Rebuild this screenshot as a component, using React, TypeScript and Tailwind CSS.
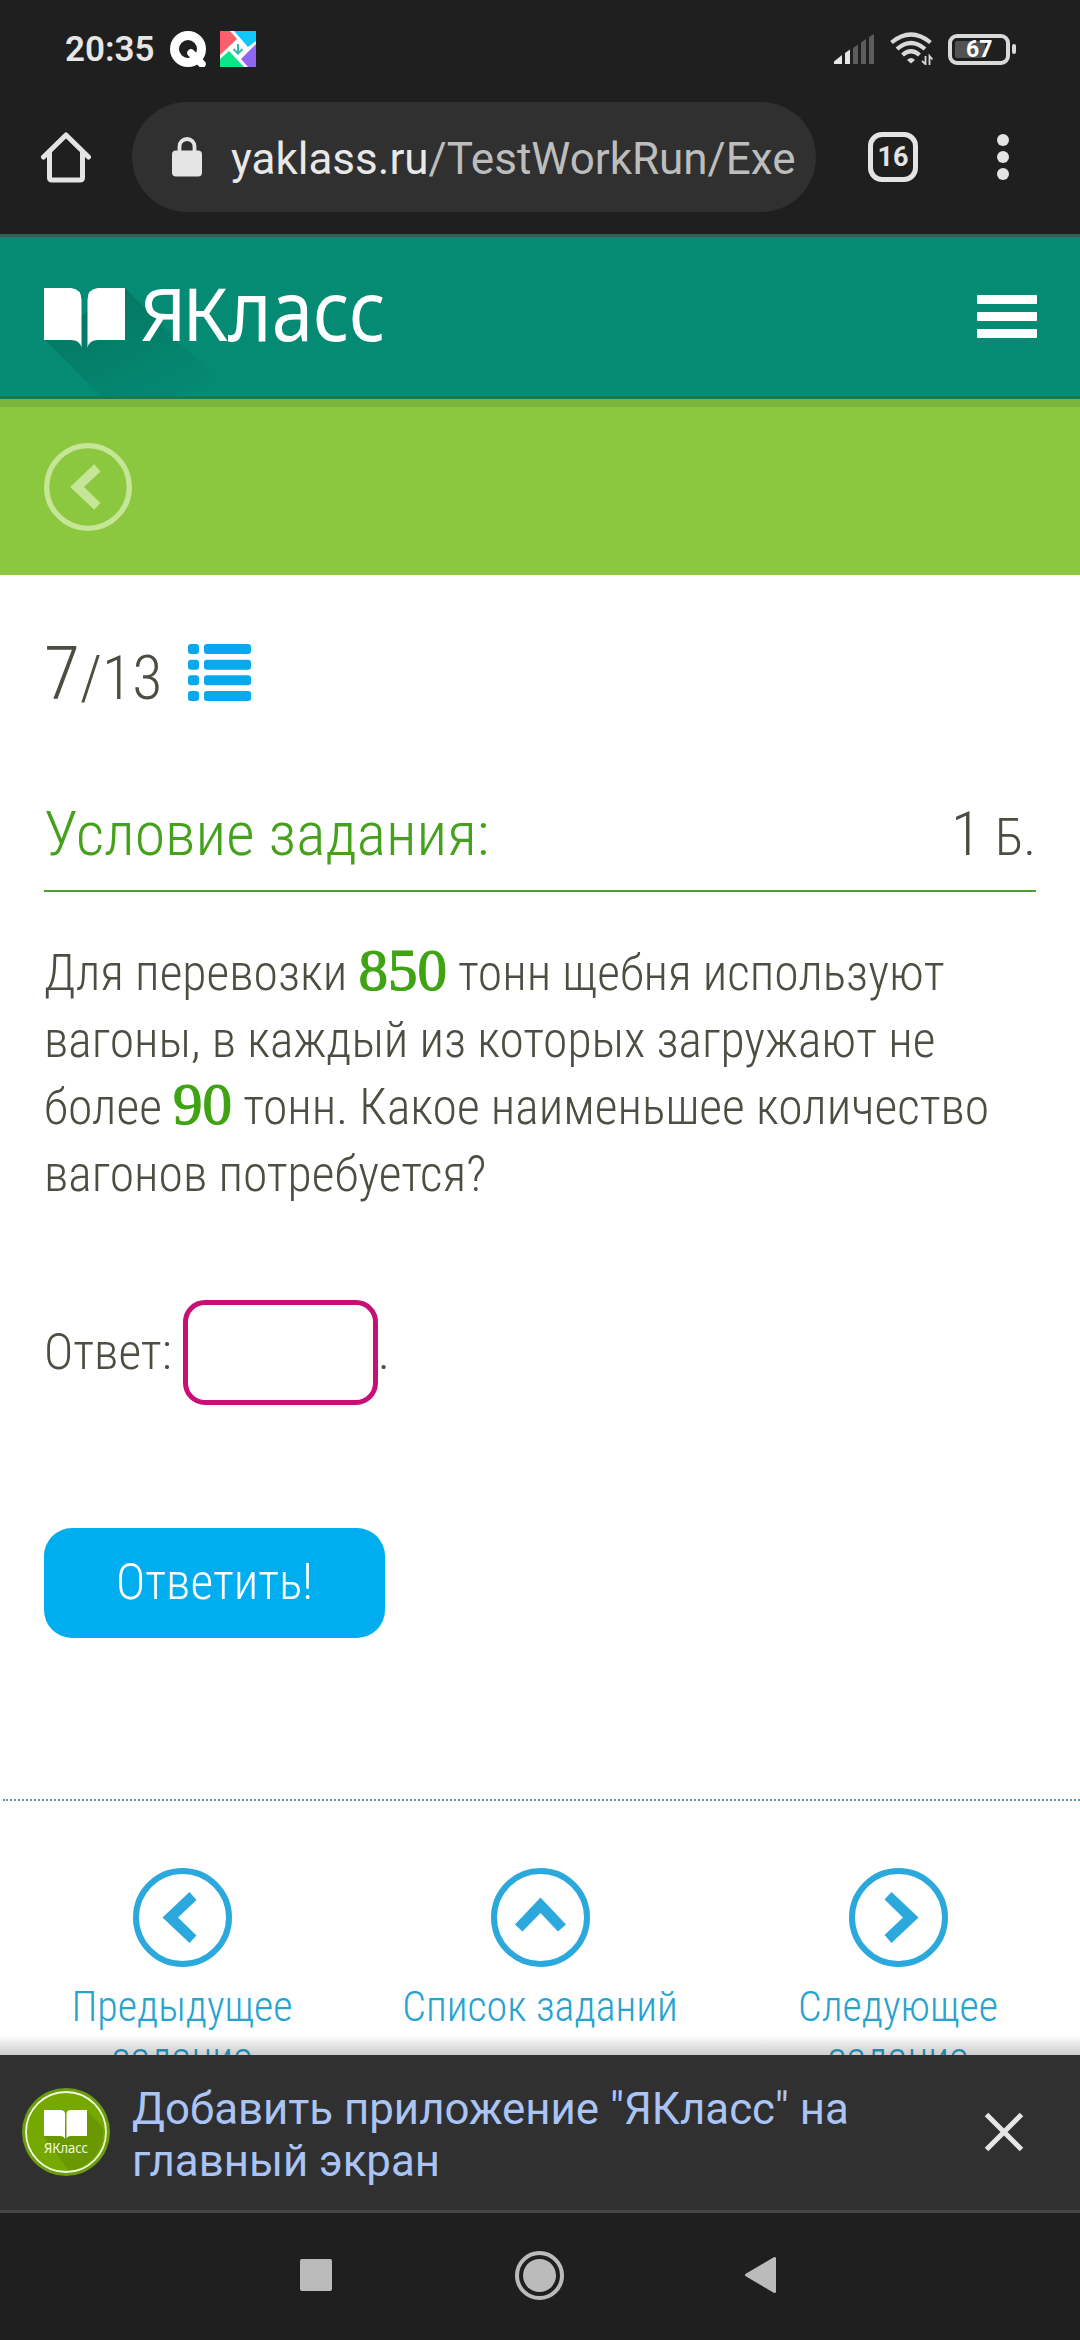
import React from "react";

const condensed =
  "font-['Roboto_Condensed','Roboto',sans-serif] font-light [font-stretch:75%]";

function StatusBar() {
  return (
    <div className="flex h-[98px] items-center bg-[#1f1f1f] pl-[65px]">
      <span className="w-[105px] text-[35px] font-semibold leading-none text-[#e6e6e6]">20:35</span>
      <svg className="h-9 w-9" viewBox="0 0 36 36">
        <circle cx="18" cy="18" r="13.5" fill="none" stroke="#fff" strokeWidth="9" />
        <path d="M21 22L32 33" stroke="#fff" strokeWidth="7.5" strokeLinecap="round" />
      </svg>
      <svg className="ml-[14px] h-9 w-9" viewBox="0 0 36 36">
        <rect width="36" height="36" fill="#fff" />
        <path d="M0 0H10L17 8L0 24Z" fill="#ff5f6d" />
        <path d="M14 0H36V10L28 16Z" fill="#0ec8fa" />
        <path d="M36 13V36H28L21 28Z" fill="#8f66f2" />
        <path d="M9 20L24 36H0V28Z" fill="#0be487" />
        <path d="M18 13V22M13.5 18L18 22.5L22.5 18" fill="none" stroke="#35b9b5" strokeWidth="2" />
      </svg>
      <svg className="ml-[578px] h-[30px] w-10" viewBox="0 0 40 30">
        <path d="M0 27.5L8 21V30H0Z" fill="#e6e6e6" />
        <path d="M11 19L16 15.500V30H11Z" fill="#e6e6e6" />
        <path d="M19 14L24 10.500V30H19Z" fill="#5c5c5c" />
        <path d="M27 8.500L32 5V30H27Z" fill="#5c5c5c" />
        <path d="M35 3L40 0V30H35Z" fill="#5c5c5c" />
      </svg>
      <svg className="ml-4 h-[34px] w-[43px]" viewBox="0 0 43 34">
        <g fill="none" stroke="#d9d9d9" strokeWidth="4.2">
          <path d="M1.500 10.500Q21 -5.500 40.500 10.500" />
          <path d="M7 17Q21 5 35 17" />
          <path d="M12.500 23Q21 15.500 29.500 23" />
        </g>
        <path d="M17 28Q21 24 25 28L21 31.500Z" fill="#d9d9d9" />
        <path d="M35.500 24V33M32 29L35.500 32M39.500 33V24L42.500 27.500" fill="none" stroke="#d9d9d9" strokeWidth="1.800" />
      </svg>
      <div className="ml-[15px] flex h-[31px] w-[62px] items-center rounded-[9px] border-4 border-[#d9d9d9] p-[3px]">
        <div className="flex h-full w-[30px] items-center rounded-[2px] bg-[#525252] pl-[11px] text-[23px] font-bold leading-none text-white">
          67
        </div>
      </div>
      <div className="ml-0.5 h-[10px] w-1 rounded-full bg-[#d9d9d9]" />
    </div>
  );
}

function BrowserBar() {
  return (
    <div className="flex h-[136px] items-center bg-[#1f1f1f] pb-[18px] pl-[41px]">
      <svg className="h-[52px] w-[50px]" viewBox="0 0 50 52" fill="none" stroke="#e4e4e4" strokeWidth="5" strokeLinecap="round" strokeLinejoin="round">
        <path d="M2.500 26L25 4L47.500 26" />
        <path d="M8.500 22V46.500Q8.500 49 11 49H39Q41.500 49 41.500 46.500V22" />
      </svg>
      <div className="ml-[41px] flex h-[110px] w-[684px] items-center rounded-full bg-[#303030] pl-10">
        <svg className="h-10 w-[30px]" viewBox="0 0 30 40">
          <rect y="13.500" width="30" height="26" rx="4" fill="#e4e4e4" />
          <path d="M7.500 15V9.500a7.500 7.500 0 0 1 15 0V15" fill="none" stroke="#e4e4e4" strokeWidth="3.800" />
        </svg>
        <span className="ml-[29px] pt-1 text-[44px] leading-none text-[#bdbdbd]">
          <span className="text-[#e8e8e8]">yaklass.ru</span>/TestWorkRun/Exe
        </span>
      </div>
      <div className="ml-[52px] flex h-[50px] w-[50px] items-center justify-center rounded-[14px] border-[5px] border-[#e4e4e4] text-[27px] font-bold leading-none text-[#e4e4e4]">
        16
      </div>
      <div className="ml-[79px] flex flex-col gap-[5px]">
        <i className="size-3 rounded-full bg-[#e4e4e4]" />
        <i className="size-3 rounded-full bg-[#e4e4e4]" />
        <i className="size-3 rounded-full bg-[#e4e4e4]" />
      </div>
    </div>
  );
}

function SiteHeader() {
  return (
    <header className="relative flex h-[165px] items-start justify-between border-y-[3px] border-t-[#3a5a53] border-b-[#137a56] bg-[#058a73] pl-11 pr-[43px]">
      <svg className="absolute left-0 top-0 h-[159px] w-[260px]" viewBox="0 0 260 159">
        <defs>
          <linearGradient id="shade" x1="0.200" y1="0.300" x2="0.800" y2="1">
            <stop offset="0" stopColor="#047a66" />
            <stop offset="1" stopColor="#058a73" />
          </linearGradient>
        </defs>
        <path d="M125 51L233 159H101L44 102Z" fill="url(#shade)" />
      </svg>
      <div className="relative flex pt-[51px]">
        <svg className="h-[60px] w-[81px]" viewBox="0 0 81 60" fill="#fff">
          <path d="M0 0H27Q37.500 1 37.500 12V60Q36 52 27 52H0Z" />
          <path d="M81 0H54Q43.500 1 43.500 12V60Q45 52 54 52H81Z" />
        </svg>
        <div className="-mt-[29px] ml-[15px] flex h-[100px] items-baseline font-['Noto_Sans',sans-serif] leading-[100px] text-white">
          <span className="w-[88px] text-[73px] tracking-[-4px]">ЯК</span>
          <span className="w-[155px] origin-left scale-x-[0.885] text-[84px] leading-[100px]">ласс</span>
        </div>
      </div>
      <div className="mt-[58px] flex w-[60px] flex-col gap-2">
        <i className="h-[9px] rounded-[1px] bg-white" />
        <i className="h-[9px] rounded-[1px] bg-white" />
        <i className="h-[9px] rounded-[1px] bg-white" />
      </div>
    </header>
  );
}

function CircleArrow({ className, turn = 0 }: { className: string; turn?: number }) {
  return (
    <svg className={className} viewBox="0 0 99 99">
      <circle cx="49.500" cy="49.500" r="46.500" fill="none" stroke="currentColor" strokeWidth="6" />
      <path d="M29.500 49.500L56.500 24L63.500 32L45 49.500L63.500 67.500L56.500 75Z" fill="currentColor" transform={`rotate(${turn} 49.500 49.500)`} />
    </svg>
  );
}

function ListIcon() {
  return (
    <svg className="h-[57px] w-[63px]" viewBox="0 0 63 57" fill="#08a9ec">
      {[0, 15.7, 31.3, 47].map((y) => (
        <g key={y}>
          <rect y={y} width="11" height="10" rx="3" />
          <rect x="16" y={y} width="47" height="10" rx="3" />
        </g>
      ))}
    </svg>
  );
}

function Num({ children }: { children: string }) {
  return (
    <span className="font-['Liberation_Serif',serif] text-[59px] font-normal leading-none text-[#3fa314] [-webkit-text-stroke:1.2px_#3fa314]">
      {children}
    </span>
  );
}

function NavItem({ label, turn }: { label: string; turn: number }) {
  return (
    <div className="flex w-[358.5px] flex-col items-center">
      <CircleArrow className="size-[99px] text-[#2ba8dc]" turn={turn} />
      <span className="mt-[14px] w-[280px] text-center text-[42px] leading-[51px] text-[#27a3cf]">{label}</span>
    </div>
  );
}

export default function App() {
  return (
    <div className="flex h-[2340px] w-[1080px] flex-col overflow-hidden bg-white font-['Roboto',sans-serif]">
      <StatusBar />
      <BrowserBar />
      <SiteHeader />
      <div className="h-[176px] shrink-0 border-t-8 border-[#7cb53c] bg-[#8cc83f] pl-11 pt-9">
        <CircleArrow className="size-[88px] text-[#c5e697]" />
      </div>

      <main className={`${condensed} h-[1480px] shrink-0 overflow-hidden text-[#4d4d42]`}>
        <div className="mx-11 mt-[69px] flex h-[57px] items-start">
          <div className="-mt-[10px] w-[144px] whitespace-nowrap text-[62px] leading-[80px]">
            <span className="text-[74px]">7</span>/13
          </div>
          <ListIcon />
        </div>
        <div className="mx-11 mt-[93px] flex h-[98px] justify-between border-b-2 border-[#4b9f2e]">
          <h1 className="text-[62px] leading-[80px] text-[#45a11c]">Условие задания:</h1>
          <span className="text-[62px] leading-[80px]">
            1 <span className="text-[52px]">Б.</span>
          </span>
        </div>
        <p className="mx-11 mt-[48px] whitespace-nowrap text-[49.6px] leading-[67px]">
          Для перевозки <Num>850</Num> тонн щебня используют
          <br />
          вагоны, в каждый из которых загружают не
          <br />
          более <Num>90</Num> тонн. Какое наименьшее количество
          <br />
          вагонов потребуется?
        </p>
        <div className="mx-11 mt-[92px] flex h-[105px] items-center text-[49.6px] leading-none">
          <span className="w-[139px] whitespace-nowrap">Ответ:</span>
          <div className="h-[105px] w-[195px] rounded-[22px] border-[5px] border-[#c90f76]" />
          <span>.</span>
        </div>
        <button className="ml-11 mt-[123px] flex h-[110px] w-[341px] items-center justify-center rounded-[28px] bg-[#00aeef] text-[49.6px] leading-none text-white">
          Ответить!
        </button>
        <div className="ml-[3px] mt-[161px] border-t-2 border-dotted border-[#5f95b3]" />
        <div className="mx-[3px] mt-[67px] flex">
          <NavItem label="Предыдущее задание" turn={0} />
          <NavItem label="Список заданий" turn={90} />
          <NavItem label="Следующее задание" turn={180} />
        </div>
      </main>

      <div className="relative flex h-[158px] shrink-0 items-start border-b-[3px] border-[#454545] bg-[#303030] pl-[22px]">
        <div className="absolute -top-5 left-0 h-5 w-full bg-gradient-to-b from-transparent to-black/20" />
        <svg className="mt-[33px] size-[88px]" viewBox="0 0 88 88">
          <circle cx="44" cy="44" r="44" fill="#6b9c10" />
          <circle cx="44" cy="44" r="39.500" fill="#76a900" />
          <path d="M65 23L81 39A39.500 39.500 0 0 1 47 83L22 49Z" fill="#699800" />
          <circle cx="44" cy="44" r="40" fill="none" stroke="#f2f9dd" strokeWidth="1.800" />
          <path d="M22 22H38Q43 22 43 26V51Q42 48 38 48H22Z" fill="#fff" />
          <path d="M65 22H49Q44.500 22 44.500 26V51Q45 48 49 48H65Z" fill="#fff" />
          <text x="22" y="65" textLength="44" lengthAdjust="spacingAndGlyphs" fontSize="14" fill="#f4f9e4" fontFamily="Noto Sans">ЯКласс</text>
        </svg>
        <p className="ml-[22px] mt-[28px] w-[852px] whitespace-nowrap text-[43.8px] leading-[52px] text-[#a9c4f5]">
          Добавить приложение "ЯКласс" на
          <br />
          главный экран
        </p>
        <svg className="mt-[57px] size-10" viewBox="0 0 40 40" stroke="#e6e6e6" strokeWidth="5">
          <path d="M2.500 2.500L37.500 37.500M37.500 2.500L2.500 37.500" />
        </svg>
      </div>
      <nav className="flex h-[127px] shrink-0 items-center bg-[#1f1f1f] pb-[3px] pl-[300px]">
        <div className="size-8 rounded-[2px] bg-[#bbb]" />
        <div className="ml-[183px] flex size-[49px] items-center justify-center rounded-full border-4 border-[#bbb]">
          <div className="size-[33px] rounded-full bg-[#bbb]" />
        </div>
        <svg className="ml-[181px] h-9 w-[31px]" viewBox="0 0 31 36">
          <path d="M29.500 1.500V34.500L1.500 18Z" fill="#bbb" stroke="#bbb" strokeWidth="3" strokeLinejoin="round" />
        </svg>
      </nav>
    </div>
  );
}
